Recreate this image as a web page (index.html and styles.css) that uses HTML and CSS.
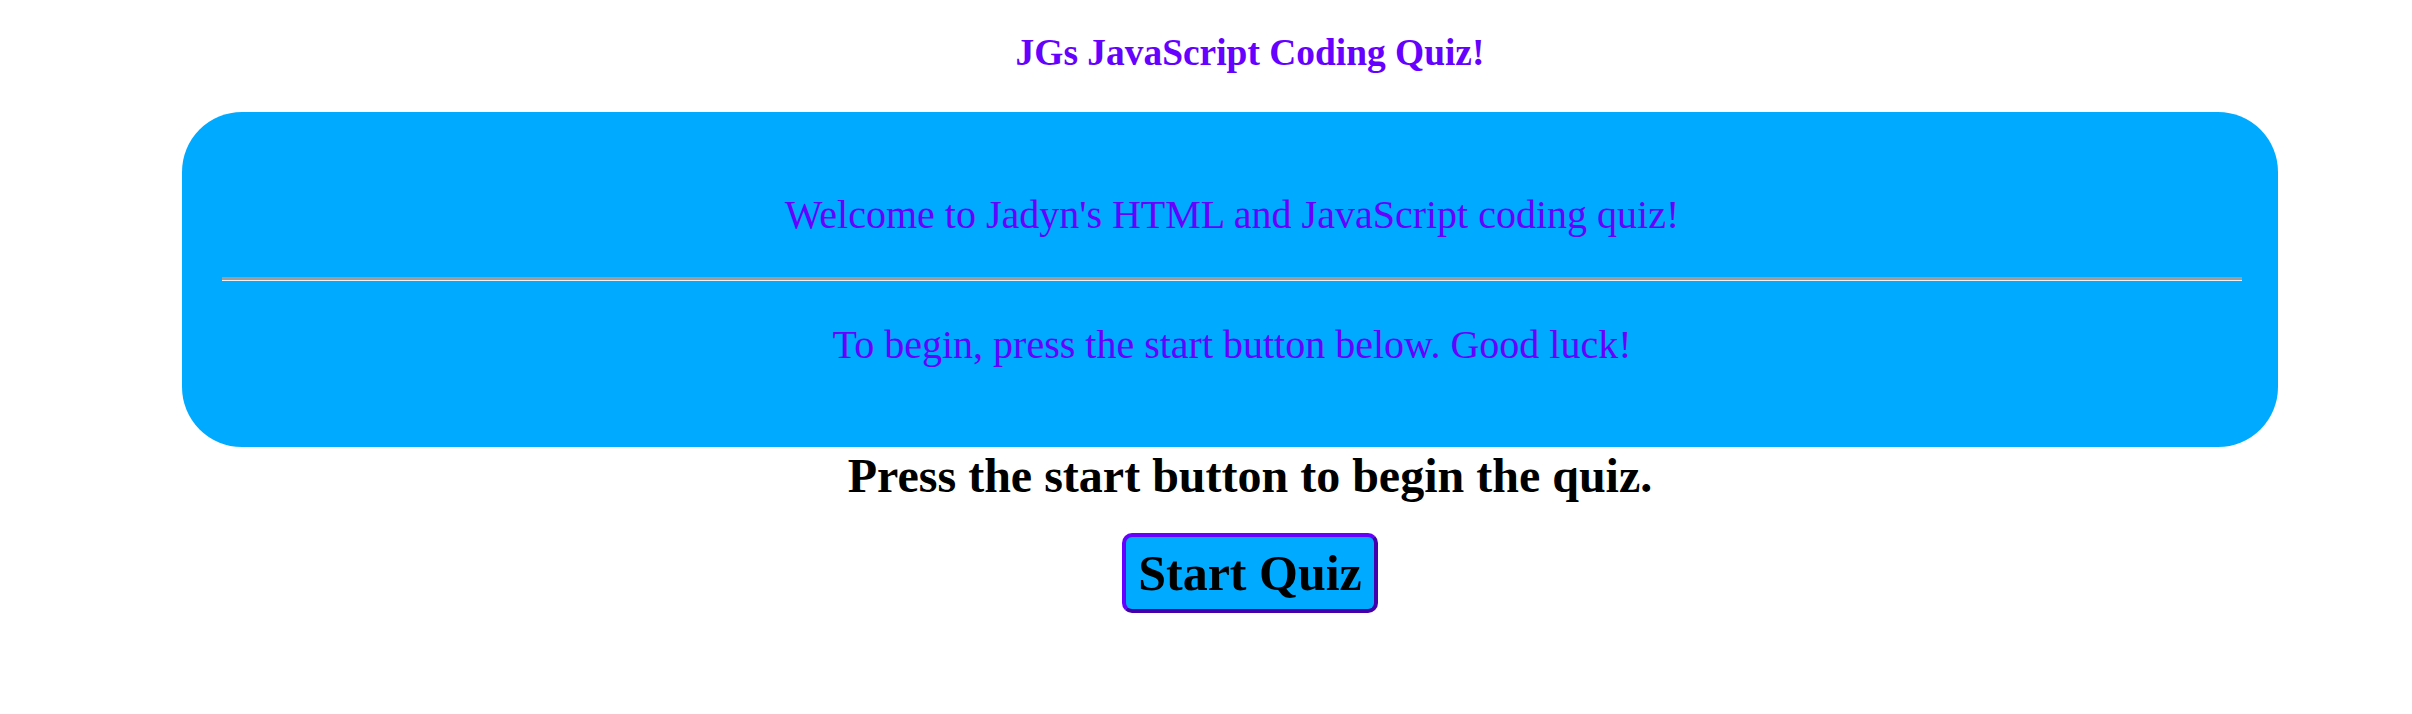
FILE: index.html
```html
<!DOCTYPE html>
<html lang="en">
<head>
<meta charset="utf-8">
<title>JGs JavaScript Coding Quiz!</title>
<link rel="stylesheet" href="styles.css">
</head>
<body>
<div class="page">
  <h3 class="title">JGs JavaScript Coding Quiz!</h3>
  <section class="intro">
    <p class="intro-text">Welcome to Jadyn's HTML and JavaScript coding quiz!</p>
    <hr class="divider">
    <p class="intro-text">To begin, press the start button below. Good luck!</p>
  </section>
  <h2 class="prompt">Press the start button to begin the quiz.</h2>
  <div class="actions">
    <button class="start-btn" type="button">Start Quiz</button>
  </div>
</div>
</body>
</html>
```
FILE: styles.css
```css
html, body {
  margin: 0;
  padding: 0;
  background: #ffffff;
}

body {
  font-family: "Liberation Serif", "Times New Roman", serif;
  color: #000000;
}

.page {
  display: flex;
  flex-direction: column;
  padding: 0 16px 0 104px;
  text-align: center;
}

.title {
  margin: 0;
  padding-top: 31px;
  font-size: 37.44px;
  line-height: 43px;
  font-weight: bold;
  color: #6600ff;
}

.intro {
  margin: 38px 118px 0 78px;
  padding: 80px 36px 41px 40px;
  background: #00aaff;
  border-radius: 60px;
}

.intro-text {
  margin: 0;
  font-size: 40px;
  line-height: 46px;
  color: #6600ff;
}

.intro-text:first-child {
  margin-bottom: 39px;
}

.intro-text:last-child {
  margin-top: 41px;
  margin-bottom: 38px;
}

.divider {
  margin: 0;
  height: 0;
  border: 0;
  border-top: 3px solid #9d9d9d;
  border-bottom: 1px solid #eeeeee;
}

.prompt {
  margin: 1px 0 0;
  font-size: 48px;
  line-height: 55px;
  font-weight: bold;
}

.actions {
  display: flex;
  justify-content: center;
  margin-top: 30px;
}

.start-btn {
  font-family: "Liberation Serif", "Times New Roman", serif;
  font-size: 50px;
  font-weight: bold;
  line-height: 58px;
  color: #000000;
  background: #00aaff;
  border: 4px outset #6600ff;
  border-radius: 10px;
  padding: 7px 12px;
}
```
